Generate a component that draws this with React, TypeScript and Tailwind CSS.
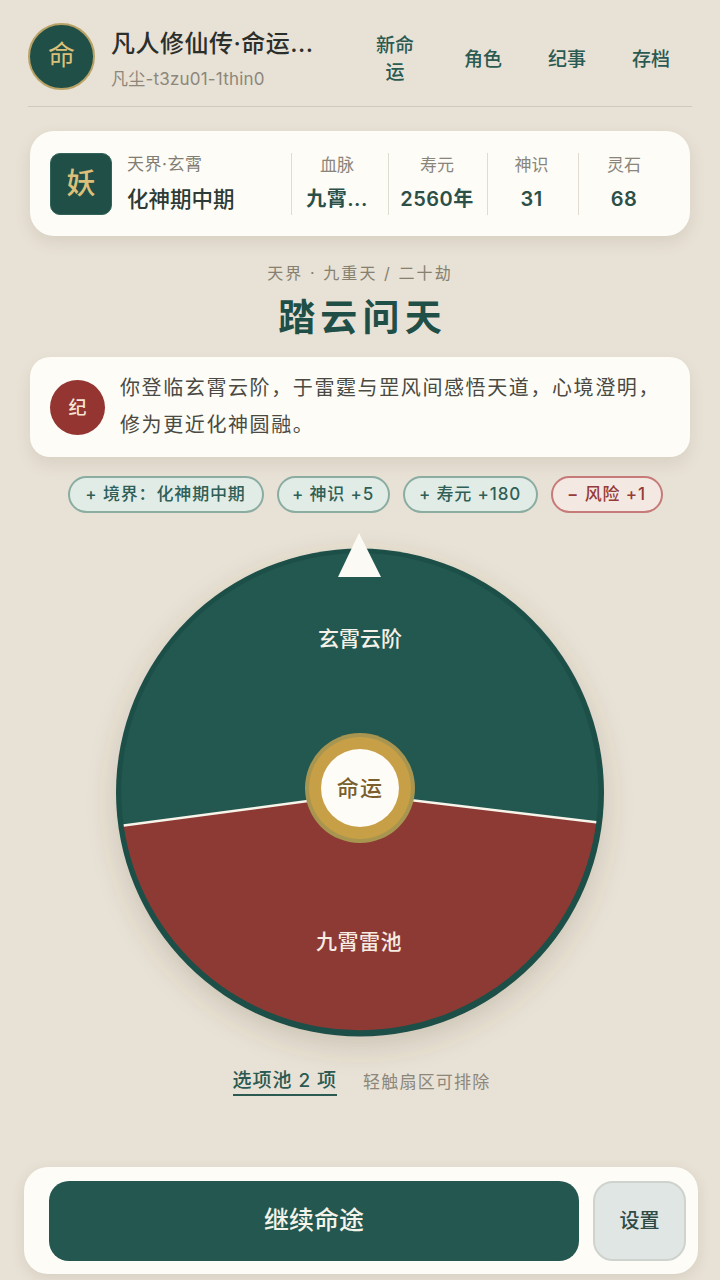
const font = { fontFamily: 'Inter, "Noto Sans CJK SC", "Noto Sans", sans-serif' };

const navItems = ['新命运', '角色', '纪事', '存档'];

const stats = [
  { label: '血脉', value: '九霄...', width: 'w-[97px]', shift: 'pr-[6px]' },
  { label: '寿元', value: '2560年', width: 'w-[99px]', shift: 'pr-[2px]' },
  { label: '神识', value: '31', width: 'w-[91px]', shift: 'pr-[3px]' },
  { label: '灵石', value: '68', width: 'w-[92px]', shift: 'pr-[1px]' },
];

const chips = [
  { text: '+ 境界：化神期中期', width: 'w-[196px]', bad: false },
  { text: '+ 神识 +5', width: 'w-[113px]', bad: false },
  { text: '+ 寿元 +180', width: 'w-[135px]', bad: false },
  { text: '− 风险 +1', width: 'w-[112px]', bad: true },
];

const Header = () => (
  <header className="mx-7 flex h-[84px] items-start border-b border-[#d0cabd]">
    <div className="flex h-[67px] w-[67px] shrink-0 items-center justify-center rounded-full border-2 border-[#b9a265] bg-[#1f4f47] text-[27px] text-[#dcc07a]">
      命
    </div>
    <div className="ml-4 w-[225px] shrink-0 pt-[5px]">
      <div className="whitespace-nowrap text-[24px] font-medium leading-[32px] tracking-[0.5px] text-[#2b2f2c]">凡人修仙传·命运...</div>
      <div className="mt-[7px] whitespace-nowrap text-[17px] leading-[24px] tracking-[0.2px] text-[#8c877b]">凡尘-t3zu01-1thin0</div>
    </div>
    <nav className="ml-[36px] flex h-[72px] items-center gap-[46px]">
      {navItems.map((item, i) => (
        <div key={item} className={`${i === 0 ? 'w-[46px]' : 'w-[38px]'} text-center text-[19px] font-medium leading-[27px] text-[#2a5a52]`}>
          {item}
        </div>
      ))}
    </nav>
  </header>
);

const StatusCard = () => (
  <section className="mx-[30px] mt-6 flex h-[105px] items-center rounded-[24px] bg-[#fdfcf7] pl-5 shadow-[0_6px_16px_rgba(90,80,60,0.12)]">
    <div className="flex h-[62px] w-[62px] shrink-0 items-center justify-center rounded-[10px] border border-[#33635a] bg-[#1f4f47] text-[29px] font-medium text-[#dcc07a]">
      妖
    </div>
    <div className="ml-[15px] w-[164px] shrink-0">
      <div className="mt-[-3px] text-[17px] leading-[24px] tracking-[0.5px] text-[#827d72]">天界·玄霄</div>
      <div className="mt-[9px] text-[21.500px] font-medium leading-[28px] text-[#2d3a36]">化神期中期</div>
    </div>
    {stats.map((stat) => (
      <div key={stat.label} className={`${stat.width} ${stat.shift} flex h-[62px] flex-col items-center border-l border-[#e0dcd2] text-center`}>
        <div className="text-[17px] leading-[24px] text-[#8a857a]">{stat.label}</div>
        <div className="mt-[8px] whitespace-nowrap text-[20px] font-semibold leading-[28px] tracking-[0.5px] text-[#2c4f48]">{stat.value}</div>
      </div>
    ))}
  </section>
);

const Chapter = () => (
  <section className="mt-[25px] text-center">
    <div className="text-[16px] leading-[24px] tracking-[0.13em] text-[#85806f]">天界 · 九重天 / 二十劫</div>
    <h1 className="mt-[9px] pl-[5px] text-[37px] font-bold leading-[48px] tracking-[0.14em] text-[#1f4f47]">踏云问天</h1>
  </section>
);

const Story = () => (
  <section className="mx-[30px] mt-[15px] flex h-[100px] items-center rounded-[20px] bg-[#fdfcf7] pl-5 shadow-[0_8px_16px_rgba(90,80,60,0.1)]">
    <div className="flex h-[55px] w-[55px] shrink-0 items-center justify-center rounded-full bg-[#943531] text-[18px] font-medium text-[#f6e5d6]">
      纪
    </div>
    <p className="ml-[15px] w-[540px] text-[20px] leading-[37px] tracking-[1.6px] text-[#4a4a42]">
      你登临玄霄云阶，于雷霆与罡风间感悟天道，心境澄明，修为更近化神圆融。
    </p>
  </section>
);

const Chips = () => (
  <div className="mt-[19px] flex justify-center gap-[13px] pl-[10px]">
    {chips.map((chip) => (
      <span
        key={chip.text}
        className={`${chip.width} flex h-[37px] shrink-0 items-center justify-center whitespace-nowrap rounded-full border-2 text-[17px] font-medium tracking-[0.05em] ${
          chip.bad ? 'border-[#c67b78] bg-[#f4e8e3] text-[#953b39]' : 'border-[#8aaca1] bg-[#e2ece7] text-[#2f5f56]'
        }`}
      >
        {chip.text}
      </span>
    ))}
  </div>
);

const Wheel = () => (
  <section className="relative mx-auto mt-[20px] h-[504px] w-[490px]">
    <svg viewBox="0 0 490 504" className="h-full w-full overflow-visible" aria-hidden="true">
      <defs>
        <filter id="wheel-shadow" x="-20%" y="-20%" width="140%" height="140%">
          <feDropShadow dx="0" dy="10" stdDeviation="14" floodColor="#5a503c" floodOpacity="0.2" />
        </filter>
      </defs>
      <circle cx="245" cy="259.500" r="244" fill="#1f4f47" filter="url(#wheel-shadow)" />
      <path d="M245 261 L8.700 292.600 A238.500 238.500 0 1 1 481.300 289.300 Z" fill="#235850" />
      <path d="M245 261 L481.300 289.300 A238.500 238.500 0 0 1 8.700 292.600 Z" fill="#8d3a35" />
      <path d="M8.700 292.600 L245 261 L481.300 289.300" fill="none" stroke="#f7f4ea" strokeWidth="2.500" />
      <path d="M244 0 L266 44 L223 44 Z" fill="#fbfaf4" />
    </svg>
    <span className="absolute left-[203px] top-[92px] text-[21px] font-medium leading-[28px] text-[#f3f1e8]">玄霄云阶</span>
    <span className="absolute left-[201px] top-[395px] text-[21px] font-medium leading-[28px] tracking-[0.5px] text-[#f7ece2]">九霄雷池</span>
    <div className="absolute left-[190px] top-[200px] flex h-[110px] w-[110px] items-center justify-center rounded-full bg-[#a8954f]">
      <div className="flex h-[102px] w-[102px] items-center justify-center rounded-full bg-[#c79f47]">
        <div className="flex h-[78px] w-[78px] items-center justify-center rounded-full bg-[#fdfcf6] text-[22px] font-medium tracking-[0.06em] text-[#7a5f2e]">
          命运
        </div>
      </div>
    </div>
  </section>
);

const PoolHint = () => (
  <div className="mt-[31px] flex items-center justify-center gap-[26px] pl-[3px]">
    <span className="border-b-2 border-[#2a5a52] text-[19px] font-medium leading-[26px] tracking-[0.05em] text-[#2a5a52]">选项池 2 项</span>
    <span className="text-[17px] leading-[26px] tracking-[1.2px] text-[#8c877b]">轻触扇区可排除</span>
  </div>
);

const Footer = () => (
  <footer className="mb-[6px] ml-6 mr-[22px] mt-auto flex h-[107px] items-center gap-[14px] rounded-[24px] bg-[#fdfcf7] pl-[25px] shadow-[0_4px_14px_rgba(90,80,60,0.12)]">
    <button className="h-[80px] w-[530px] shrink-0 rounded-[20px] bg-[#24574f] text-[25px] font-medium text-[#f3f3ea]">继续命途</button>
    <button className="h-[80px] w-[93px] shrink-0 rounded-[20px] border-2 border-[#cfd3cd] bg-[#e0e6e4] text-[20px] font-medium text-[#2f4a45]">设置</button>
  </footer>
);

export default function App() {
  return (
    <div style={font} className="flex h-[1280px] w-[720px] flex-col overflow-hidden bg-[#e8e1d5] pt-[23px]">
      <Header />
      <StatusCard />
      <Chapter />
      <Story />
      <Chips />
      <Wheel />
      <PoolHint />
      <Footer />
    </div>
  );
}
